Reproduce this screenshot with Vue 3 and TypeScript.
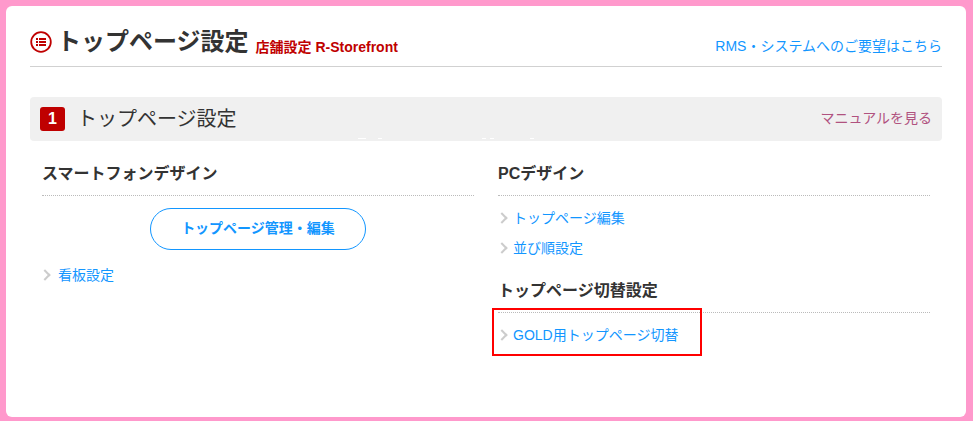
<template>
  <div class="page">
    <div class="card">
      <header class="head">
        <div class="head-title">
          <svg class="list-icon" width="22" height="22" viewBox="0 0 22 22">
            <circle cx="11" cy="11" r="9.8" fill="none" stroke="#bf0000" stroke-width="1.8" />
            <g fill="#bf0000">
              <rect x="6" y="7" width="2" height="2" />
              <rect x="9" y="7" width="7" height="2" />
              <rect x="6" y="10" width="2" height="2" />
              <rect x="9" y="10" width="7" height="2" />
              <rect x="6" y="13" width="2" height="2" />
              <rect x="9" y="13" width="7" height="2" />
            </g>
          </svg>
          <h1>トップページ設定</h1>
          <span class="crumb">店舗設定 R-Storefront</span>
        </div>
        <a class="request">RMS・システムへのご要望はこちら</a>
      </header>

      <div class="bar">
        <div class="bar-title">
          <span class="num">1</span>
          <h2>トップページ設定</h2>
        </div>
        <a class="manual">マニュアルを見る</a>
        <i
          v-for="d in dashes"
          :key="d.left"
          class="dash"
          :style="{ left: d.left + 'px', width: d.width + 'px' }"
        ></i>
      </div>

      <div class="cols">
        <section class="col col-left">
          <h3>スマートフォンデザイン</h3>
          <div class="btn-row"><a class="btn">トップページ管理・編集</a></div>
          <ul>
            <li v-for="item in spLinks" :key="item"><a>{{ item }}</a></li>
          </ul>
        </section>
        <section class="col col-right">
          <h3>PCデザイン</h3>
          <ul>
            <li v-for="item in pcLinks" :key="item"><a>{{ item }}</a></li>
          </ul>
          <h3 class="second">トップページ切替設定</h3>
          <ul>
            <li class="highlighted"><a>GOLD用トップページ切替</a></li>
          </ul>
        </section>
      </div>
    </div>
  </div>
</template>

<script setup lang="ts">
const spLinks: string[] = ['看板設定']
const pcLinks: string[] = ['トップページ編集', '並び順設定']
const dashes = [
  { left: 328, width: 8 },
  { left: 348, width: 4 },
  { left: 452, width: 4 },
  { left: 460, width: 4 },
  { left: 500, width: 4 },
]
</script>

<style>
html,
body {
  margin: 0;
  background: #ff99cc;
}
</style>

<style scoped>
.page {
  box-sizing: border-box;
  width: 973px;
  height: 421px;
  padding: 6px 7px 4px 6px;
  background: #ff99cc;
  font-family: "Liberation Sans", "Noto Sans CJK JP", sans-serif;
  color: #333;
}

.card {
  box-sizing: border-box;
  height: 100%;
  padding: 18px 24px 0;
  background: #fff;
  border-radius: 6px;
}

a {
  color: #1296ff;
  text-decoration: none;
}

.head {
  display: flex;
  justify-content: space-between;
  align-items: flex-end;
  height: 42px;
  border-bottom: 1px solid #d1d1d1;
}

.head-title {
  display: flex;
  align-items: center;
  height: 34px;
  margin-bottom: 7px;
}

.list-icon {
  margin-right: 5px;
}

h1 {
  margin: 0 7px 0 0;
  font-size: 24px;
  font-weight: bold;
  line-height: 34px;
}

.crumb {
  margin-top: 7px;
  font-size: 14px;
  font-weight: bold;
  color: #bf0000;
}

.request {
  margin-bottom: 10px;
  font-size: 14px;
  line-height: 20px;
}

.bar {
  position: relative;
  display: flex;
  justify-content: space-between;
  align-items: center;
  height: 44px;
  margin-top: 30px;
  padding: 0 10px;
  background: #f0f0f0;
  border-radius: 4px;
}

.bar-title {
  display: flex;
  align-items: center;
}

.num {
  width: 25px;
  height: 24px;
  margin-right: 12px;
  background: #bf0000;
  border-radius: 3px;
  color: #fff;
  font-size: 16px;
  font-weight: bold;
  line-height: 24px;
  text-align: center;
}

h2 {
  margin: 0;
  font-size: 20px;
  font-weight: normal;
  line-height: 24px;
}

.manual {
  margin-bottom: 4px;
  font-size: 14px;
  color: #b0527f;
}

.dash {
  position: absolute;
  top: 41px;
  height: 1px;
  background: #fff;
}

.cols {
  display: flex;
  margin-top: 17px;
}

.col-left {
  width: 432px;
  margin-left: 12px;
}

.col-right {
  width: 432px;
  margin-left: 24px;
}

h3 {
  margin: 0;
  height: 37px;
  border-bottom: 1px dotted #bbb;
  font-size: 16px;
  font-weight: bold;
  line-height: 31px;
}

h3.second {
  height: 37px;
  margin-top: 12px;
}

.btn-row {
  display: flex;
  justify-content: center;
  margin-top: 12px;
}

.btn {
  box-sizing: border-box;
  width: 216px;
  height: 42px;
  border: 1px solid #1296ff;
  border-radius: 21px;
  font-size: 14px;
  font-weight: bold;
  line-height: 39px;
  text-align: center;
}

ul {
  margin: 0;
  padding: 0;
  list-style: none;
}

.col-left ul {
  margin-top: 10px;
}

.col-right ul {
  margin-top: 7px;
}

li {
  position: relative;
  height: 30px;
  padding-left: 16px;
  font-size: 14px;
  line-height: 30px;
}

.col-right li {
  padding-left: 15px;
}

li::before {
  content: "";
  position: absolute;
  left: -1px;
  top: 11px;
  width: 6px;
  height: 6px;
  border-top: 2px solid #ccc;
  border-right: 2px solid #ccc;
  transform: rotate(45deg);
}

.col-right li::before {
  left: 0;
}

.highlighted {
  margin-top: 7px;
}

.highlighted::after {
  content: "";
  position: absolute;
  left: -6px;
  top: -12px;
  width: 206px;
  height: 44px;
  border: 2px solid #ff0000;
}
</style>
